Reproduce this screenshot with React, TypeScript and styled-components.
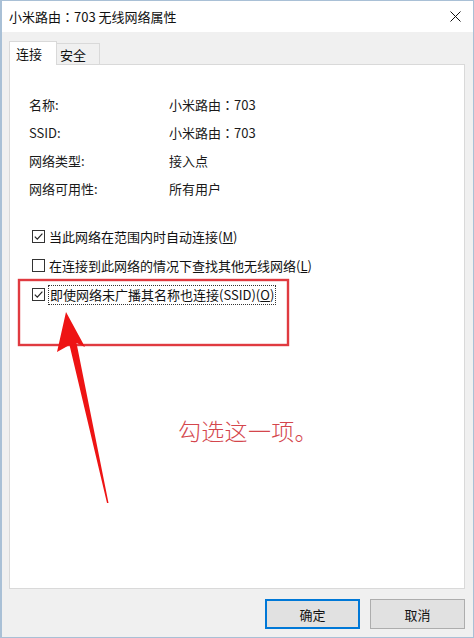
import React from "react";
import styled, { createGlobalStyle } from "styled-components";

const GlobalStyle = createGlobalStyle`
  body {
    margin: 0;
    font-family: "Noto Sans CJK SC", "Noto Sans", "Liberation Sans", sans-serif;
    color: #1a1a1a;
  }
`;

// fullwidth colon rendered centred, as on Windows
const Colon = styled.span`
  font-family: "Noto Sans CJK TC", "Noto Sans CJK SC", sans-serif;
`;

const props = [
  { label: "名称:", value: ["小米路由", "703"] },
  { label: "SSID:", value: ["小米路由", "703"] },
  { label: "网络类型:", value: ["接入点"] },
  { label: "网络可用性:", value: ["所有用户"] },
];

const CheckMark = () => (
  <svg width="11" height="11" viewBox="0 0 11 11">
    <path d="M1.8 5.6 L4.3 8.2 L9.4 2.6" fill="none" stroke="#222" strokeWidth="1.2" />
  </svg>
);

const Check = ({ checked }: { checked: boolean }) => (
  <Box>{checked && <CheckMark />}</Box>
);

const App = () => {
  return (
    <>
      <GlobalStyle />
      <Window>
        <TitleBar>
          <span>
            小米路由<Colon>：</Colon>703 无线网络属性
          </span>
          <svg width="11" height="11" viewBox="0 0 11 11">
            <path d="M0.5 0.5 L10.5 10.5 M10.5 0.5 L0.5 10.5" stroke="#111" strokeWidth="1" />
          </svg>
        </TitleBar>
        <Body>
          <TabStrip>
            <Tab $active>连接</Tab>
            <Tab>安全</Tab>
          </TabStrip>
          <Panel>
            <PropGrid>
              {props.map((p) => (
                <React.Fragment key={p.label}>
                  <span>{p.label}</span>
                  <span>
                    {p.value[0]}
                    {p.value[1] && (
                      <>
                        <Colon>：</Colon>
                        {p.value[1]}
                      </>
                    )}
                  </span>
                </React.Fragment>
              ))}
            </PropGrid>
            <Options>
              <Option>
                <Check checked />
                <span>
                  当此网络在范围内时自动连接(<U>M</U>)
                </span>
              </Option>
              <Option>
                <Check checked={false} />
                <span>
                  在连接到此网络的情况下查找其他无线网络(<U>L</U>)
                </span>
              </Option>
              <Option>
                <Check checked />
                <Focused>
                  即使网络未广播其名称也连接(SSID)(<U>O</U>)
                </Focused>
              </Option>
            </Options>
          </Panel>
          <Footer>
            <Button $primary>确定</Button>
            <Button>取消</Button>
          </Footer>
        </Body>

        <Overlay width="474" height="638" viewBox="0 0 474 638">
          <rect x="19" y="280" width="269" height="65" fill="none" stroke="#e03a40" strokeWidth="2.4" />
          <polygon
            points="66,312 85,347 76.5,343 108.5,503 107,503 69.5,345 57,352"
            fill="#ee1414"
          />
        </Overlay>
        <Note>勾选这一项。</Note>
      </Window>
    </>
  );
};

export default App;

const Window = styled.div`
  position: relative;
  width: 474px;
  height: 638px;
  box-sizing: border-box;
  border: 1px solid #a9c0d6;
  border-left-width: 2px;
  display: flex;
  flex-direction: column;
  font-size: 13px;
`;

const TitleBar = styled.div`
  height: 31px;
  background: #fff;
  display: flex;
  align-items: center;
  justify-content: space-between;
  padding: 0 12px 0 7px;
  font-size: 13px;
  color: #111;

  span {
    margin-top: -1px;
  }
`;

const Body = styled.div`
  flex: 1;
  background: #f0f0f0;
  padding: 9px 8px 0 7px;
  display: flex;
  flex-direction: column;
`;

const TabStrip = styled.div`
  display: flex;
  align-items: flex-end;
  height: 23px;
  position: relative;
  z-index: 1;
`;

const Tab = styled.div<{ $active?: boolean }>`
  box-sizing: border-box;
  display: flex;
  align-items: center;
  border: 1px solid #d9d9d9;
  border-bottom: none;
  width: ${(p) => (p.$active ? "48px" : "43px")};
  height: ${(p) => (p.$active ? "24px" : "21px")};
  margin-bottom: ${(p) => (p.$active ? "-1px" : "0")};
  padding: ${(p) => (p.$active ? "0 0 1px 6px" : "0 0 0 3px")};
  background: ${(p) => (p.$active ? "#fff" : "#f0f0f0")};
  border-left: ${(p) => (p.$active ? "1px solid #d9d9d9" : "none")};
  color: #111;
`;

const Panel = styled.div`
  flex: 1;
  background: #fff;
  border: 1px solid #d9d9d9;
  padding: 25px 19px 0 19px;
`;

const PropGrid = styled.div`
  display: grid;
  grid-template-columns: 140px 1fr;
  grid-auto-rows: 28px;
  align-items: center;
  color: #1a1a1a;
`;

const Options = styled.div`
  margin-top: 20px;
  padding-left: 3px;
  display: flex;
  flex-direction: column;
`;

const Option = styled.div`
  height: 29px;
  display: flex;
  align-items: center;
  gap: 4px;
  color: #111;
`;

const Box = styled.div`
  box-sizing: border-box;
  width: 13px;
  height: 13px;
  border: 1px solid #333;
  background: #fff;
  display: flex;
  align-items: center;
  justify-content: center;
  flex-shrink: 0;
`;

const Focused = styled.span`
  border: 1px dotted #333;
  padding: 0 1px;
  margin-left: -1px;
  line-height: 18px;
`;

const U = styled.span`
  text-decoration: underline;
`;

const Footer = styled.div`
  height: 48px;
  box-sizing: border-box;
  padding-top: 10px;
  display: flex;
  justify-content: flex-end;
  align-items: flex-start;
  gap: 10px;
`;

const Button = styled.button<{ $primary?: boolean }>`
  width: 95px;
  height: 30px;
  font-family: inherit;
  font-size: 13px;
  color: #111;
  background: #e1e1e1;
  border: 1px solid ${(p) => (p.$primary ? "#0078d7" : "#adadad")};
  box-shadow: ${(p) => (p.$primary ? "inset 0 0 0 1px #0078d7" : "none")};
  padding: 0;
`;

const Overlay = styled.svg`
  position: absolute;
  top: -1px;
  left: -2px;
  pointer-events: none;
`;

const Note = styled.div`
  position: absolute;
  left: 176px;
  top: 414px;
  font-size: 23px;
  line-height: 30px;
  font-weight: 300;
  color: #d4464c;
  letter-spacing: 0.3px;
`;
